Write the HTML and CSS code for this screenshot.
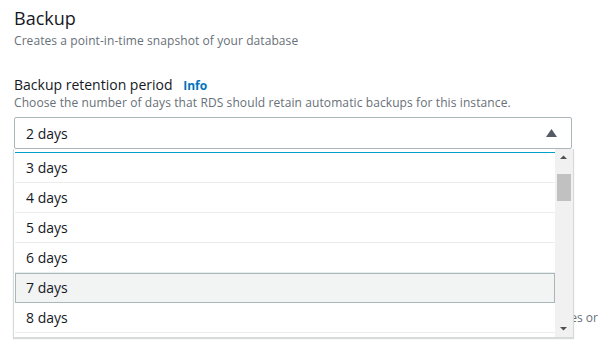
FILE: index.html
```html
<!DOCTYPE html>
<html>
<head>
<meta charset="utf-8">
<link rel="stylesheet" href="styles.css">
</head>
<body>
<div class="page">
  <h2 class="title">Backup</h2>
  <p class="desc">Creates a point-in-time snapshot of your database</p>

  <div class="field">
    <div class="label">Backup retention period <a class="info">Info</a></div>
    <div class="hint">Choose the number of days that RDS should retain automatic backups for this instance.</div>
    <div class="select-wrap">
      <div class="select">
        <span class="value">2 days</span>
        <svg class="caret" width="11" height="8" viewBox="0 0 11 8"><path d="M5.5 0 L11 8 L0 8 Z" fill="#545b64"/></svg>
      </div>
      <div class="listbox">
        <div class="options">
          <div class="opt-prev"></div>
          <div class="opt">3 days</div>
          <div class="opt">4 days</div>
          <div class="opt">5 days</div>
          <div class="opt">6 days</div>
          <div class="opt hl">7 days</div>
          <div class="opt">8 days</div>
          <div class="opt"></div>
        </div>
        <div class="scrollbar">
          <svg class="arrow" width="17" height="17" viewBox="0 0 17 17"><path d="M5 10 L8.5 6.5 L12 10 Z" fill="#505050"/></svg>
          <div class="track"><div class="thumb"></div></div>
          <svg class="arrow" width="17" height="17" viewBox="0 0 17 17"><path d="M5 7 L8.5 10.5 L12 7 Z" fill="#505050"/></svg>
        </div>
      </div>
    </div>
  </div>

  <div class="peek"><span>backup times or</span></div>
</div>
</body>
</html>
```

FILE: styles.css
```css
html, body {
  margin: 0;
  padding: 0;
  background: #ffffff;
}

body {
  font-family: "Open Sans", "Noto Sans", sans-serif;
  color: #16191f;
}

.page {
  padding: 7px 28px 0 14px;
  overflow: hidden;
  height: 342px;
}

.title {
  margin: 0;
  font-size: 18px;
  line-height: 22px;
  font-weight: 400;
  color: #16191f;
}

.desc {
  margin: 4px 0 0 0;
  font-size: 12px;
  line-height: 16px;
  letter-spacing: 0.08px;
  color: #687078;
}

.field {
  margin-top: 26px;
}

.label {
  font-size: 14px;
  line-height: 20px;
  height: 20px;
  color: #16191f;
}

.info {
  margin-left: 7px;
  font-size: 12px;
  line-height: 1;
  font-weight: 700;
  color: #0073bb;
}

.hint {
  font-size: 12px;
  line-height: 16px;
  letter-spacing: 0.1px;
  color: #687078;
}

.select-wrap {
  position: relative;
  margin-top: 6px;
}

.select {
  display: flex;
  align-items: center;
  justify-content: space-between;
  height: 30px;
  padding: 0 14px 0 11px;
  border: 1px solid #aab7b8;
  border-radius: 2px;
  font-size: 14px;
  line-height: 20px;
}

.value {
  padding-top: 1px;
}

.caret {
  display: block;
  margin-top: -1px;
}

.listbox {
  position: absolute;
  left: -1px;
  right: -2px;
  top: 32px;
  height: 188px;
  display: flex;
  background: #ffffff;
  border: 1px solid #d5dbdb;
  border-top: none;
  box-shadow: 0 1px 1px rgba(0, 0, 0, 0.15);
  overflow: hidden;
  z-index: 2;
}

.options {
  flex: 1;
  padding-left: 1px;
}

.opt-prev {
  height: 3px;
  border-bottom: 1px solid #00a1c9;
}

.opt {
  height: 20px;
  padding: 5px 12px 4px 11px;
  font-size: 14px;
  line-height: 20px;
  border-bottom: 1px solid #eaeded;
}

.opt.hl {
  background: #f2f3f3;
  border: 1px solid #aab7b8;
  padding: 4px 12px 4px 10px;
}

.scrollbar {
  width: 18px;
  display: flex;
  flex-direction: column;
  background: #f1f1f1;
}

.arrow {
  display: block;
  flex: none;
}

.track {
  flex: 1;
  padding: 8px 2px 0 2px;
}

.thumb {
  height: 27px;
  background: #c1c1c1;
}

.peek {
  display: flex;
  justify-content: flex-end;
  width: 26px;
  margin: 161px -26px 0 auto;
  overflow: hidden;
  white-space: nowrap;
  font-size: 12px;
  line-height: 16px;
  color: #687078;
}

.peek span {
  flex: none;
}
```
